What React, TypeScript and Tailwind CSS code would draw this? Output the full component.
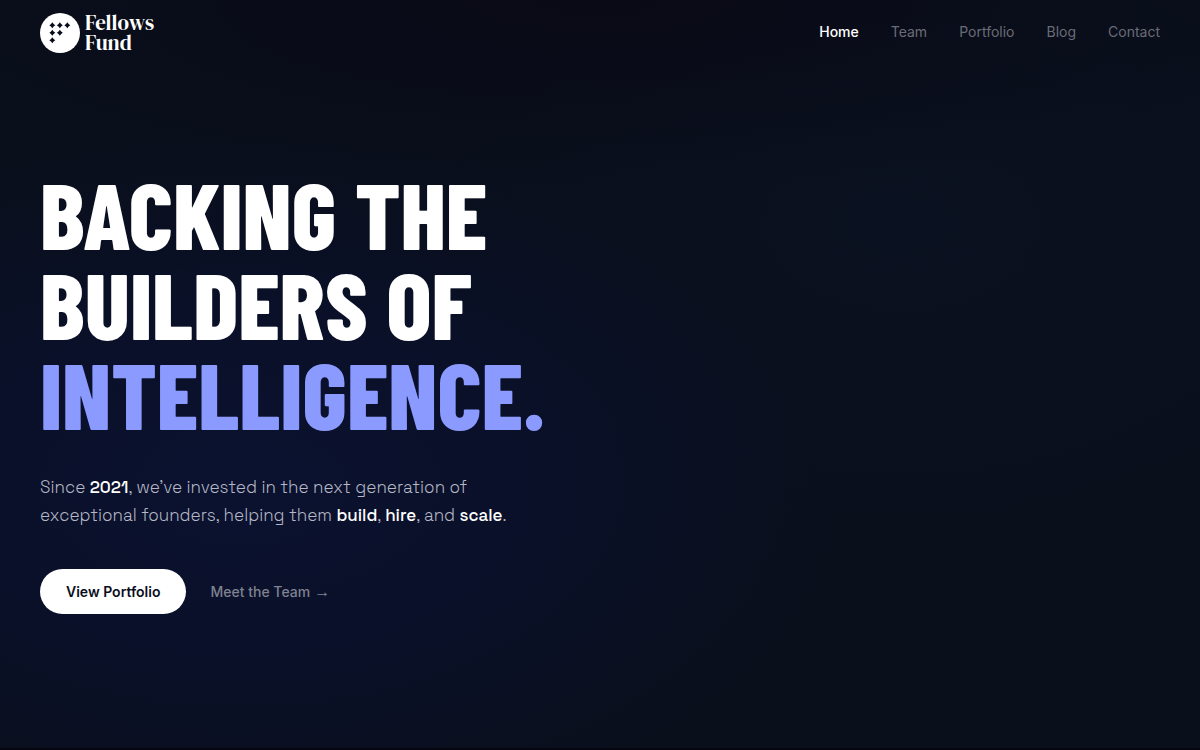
const links = ["Team", "Portfolio", "Blog", "Contact"];

const stars = [
  [12.3, 12.3],
  [19.8, 12.3],
  [27.3, 12.3],
  [12.3, 19.8],
  [19.8, 19.8],
  [12.3, 27.3],
];

function Logo() {
  return (
    <a href="#home" aria-label="Fellows Fund" className="flex items-center gap-[5px] pt-0.5 text-white">
      <svg viewBox="0 0 40 40" className="size-10" aria-hidden="true">
        <circle cx="20" cy="20" r="20" fill="#fff" />
        {stars.map(([x, y]) => (
          <path
            key={`${x}-${y}`}
            transform={`translate(${x} ${y})`}
            d="M0-3C.8-1.7 1.7-.8 3 0C1.7.8.8 1.7 0 3C-.8 1.7-1.7.8-3 0C-1.7-.8-.8-1.7 0-3Z"
            fill="#080c1a"
          />
        ))}
      </svg>
      <span className="font-['DM_Serif_Display','Playfair_Display','Liberation_Serif',serif] text-[21px] leading-5">
        Fellows
        <br />
        Fund
      </span>
    </a>
  );
}

export default function App() {
  return (
    <div className="min-h-screen bg-[#05060f] font-['Inter',sans-serif] text-white">
      <div className="flex min-h-[calc(100vh-2px)] flex-col bg-[#090f1b] bg-[radial-gradient(ellipse_50%_46%_at_20%_65%,#0b1230_0%,#0a1028_50%,#090f1b00_100%),radial-gradient(ellipse_60%_25%_at_50%_0%,#090a16_0%,#090f1b00_100%),radial-gradient(ellipse_40%_40%_at_75%_30%,#0a1120_0%,#090f1b00_100%)]">
        <header className="flex h-16 items-center justify-between px-10">
          <Logo />
          <nav className="flex gap-8 text-sm text-[#696c77]">
            <a href="#home" aria-current="page" className="font-medium text-white">
              Home
            </a>
            {links.map((label) => (
              <a key={label} href={`#${label.toLowerCase()}`}>
                {label}
              </a>
            ))}
          </nav>
        </header>
        <main className="flex flex-1 flex-col items-start justify-center px-10 pb-[30px]">
          <h1 className="font-['Barlow_Condensed','Liberation_Sans_Narrow',sans-serif] text-[94px] leading-[90px] font-extrabold whitespace-nowrap uppercase">
            Backing the
            <br />
            Builders of
            <br />
            <span className="text-[#8b9aff]">Intelligence.</span>
          </h1>
          <p className="mt-[35px] max-w-[480px] font-['Space_Grotesk','Inter',sans-serif] text-[17px] leading-7 font-light text-[#b5b8c6]">
            Since <strong className="font-medium text-white">2021</strong>, we’ve invested in the next generation of
            exceptional founders, helping them <strong className="font-medium text-white">build</strong>,{" "}
            <strong className="font-medium text-white">hire</strong>, and{" "}
            <strong className="font-medium text-white">scale</strong>.
          </p>
          <div className="mt-10 flex items-center gap-6 text-sm leading-[21px]">
            <a href="#portfolio" className="rounded-full bg-white px-[26px] py-3 font-semibold text-[#0a0e1c]">
              View Portfolio
            </a>
            <a href="#team" className="flex items-center gap-1 font-medium text-[#7f8290]">
              Meet the Team
              <span className="font-['Liberation_Sans',sans-serif] text-base leading-[21px]">→</span>
            </a>
          </div>
        </main>
      </div>
    </div>
  );
}
